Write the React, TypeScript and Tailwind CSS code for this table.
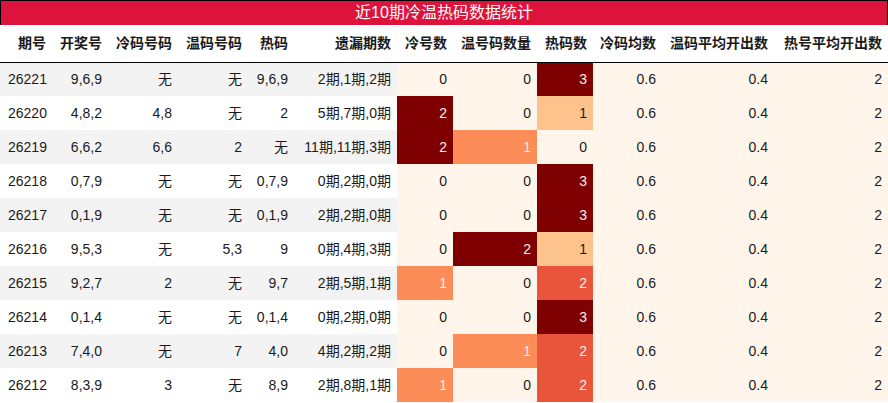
import React from "react"

type Row = {
  issue: string
  draw: string
  cold: string
  warm: string
  hot: string
  miss: string
  coldN: number
  warmN: number
  hotN: number
}

const rows: Row[] = [
  { issue: "26221", draw: "9,6,9", cold: "无", warm: "无", hot: "9,6,9", miss: "2期,1期,2期", coldN: 0, warmN: 0, hotN: 3 },
  { issue: "26220", draw: "4,8,2", cold: "4,8", warm: "无", hot: "2", miss: "5期,7期,0期", coldN: 2, warmN: 0, hotN: 1 },
  { issue: "26219", draw: "6,6,2", cold: "6,6", warm: "2", hot: "无", miss: "11期,11期,3期", coldN: 2, warmN: 1, hotN: 0 },
  { issue: "26218", draw: "0,7,9", cold: "无", warm: "无", hot: "0,7,9", miss: "0期,2期,0期", coldN: 0, warmN: 0, hotN: 3 },
  { issue: "26217", draw: "0,1,9", cold: "无", warm: "无", hot: "0,1,9", miss: "2期,2期,0期", coldN: 0, warmN: 0, hotN: 3 },
  { issue: "26216", draw: "9,5,3", cold: "无", warm: "5,3", hot: "9", miss: "0期,4期,3期", coldN: 0, warmN: 2, hotN: 1 },
  { issue: "26215", draw: "9,2,7", cold: "2", warm: "无", hot: "9,7", miss: "2期,5期,1期", coldN: 1, warmN: 0, hotN: 2 },
  { issue: "26214", draw: "0,1,4", cold: "无", warm: "无", hot: "0,1,4", miss: "0期,2期,0期", coldN: 0, warmN: 0, hotN: 3 },
  { issue: "26213", draw: "7,4,0", cold: "无", warm: "7", hot: "4,0", miss: "4期,2期,2期", coldN: 0, warmN: 1, hotN: 2 },
  { issue: "26212", draw: "8,3,9", cold: "3", warm: "无", hot: "8,9", miss: "2期,8期,1期", coldN: 1, warmN: 0, hotN: 2 },
]

const headers = [
  "期号",
  "开奖号",
  "冷码号码",
  "温码号码",
  "热码",
  "遗漏期数",
  "冷号数",
  "温号码数量",
  "热码数",
  "冷码均数",
  "温码平均开出数",
  "热号平均开出数",
]

const widths = [52, 56, 70, 70, 46, 103, 56, 84, 56, 69, 112, 114]

// OrRd-ish scale, picked by value / column max
function heat(v: number, max: number) {
  const t = max === 0 ? 0 : v / max
  if (t === 0) return "bg-[#fff5eb] text-[#1a1a1a]"
  if (t < 0.4) return "bg-[#fdc38d] text-[#1a1a1a]"
  if (t < 0.6) return "bg-[#fc8d59] text-[#f1f1f1]"
  if (t < 0.9) return "bg-[#e8553b] text-[#f1f1f1]"
  return "bg-[#7f0000] text-[#f1f1f1]"
}

export default function App() {
  const maxCold = Math.max(...rows.map((r) => r.coldN))
  const maxWarm = Math.max(...rows.map((r) => r.warmN))
  const maxHot = Math.max(...rows.map((r) => r.hotN))

  return (
    <div
      className="w-[888px] bg-white text-[14px] text-[#1a1a1a]"
      style={{ fontFamily: '"Liberation Sans", "Noto Sans CJK SC", sans-serif' }}
    >
      <div className="h-[25px] border border-b-0 border-black bg-[#dc143c] text-center text-[16px] leading-[24px] text-white">
        近10期冷温热码数据统计
      </div>
      <table className="w-[888px] table-fixed border-collapse">
        <colgroup>
          {widths.map((w, i) => (
            <col key={i} style={{ width: w }} />
          ))}
        </colgroup>
        <thead>
          <tr className="h-[37px] border-b border-black">
            {headers.map((h) => (
              <th key={h} className="whitespace-nowrap px-[6px] text-right font-bold">
                {h}
              </th>
            ))}
          </tr>
        </thead>
        <tbody>
          {rows.map((r, i) => {
            const stripe = i % 2 === 0 ? "bg-[#f3f3f3]" : "bg-white"
            return (
              <tr key={r.issue} className="h-[34px]">
                <td className={`${stripe} px-[6px] text-left pl-[8px]`}>{r.issue}</td>
                <td className={`${stripe} px-[6px] text-right`}>{r.draw}</td>
                <td className={`${stripe} px-[6px] text-right`}>{r.cold}</td>
                <td className={`${stripe} px-[6px] text-right`}>{r.warm}</td>
                <td className={`${stripe} px-[6px] text-right`}>{r.hot}</td>
                <td className={`${stripe} whitespace-nowrap px-[6px] text-right`}>{r.miss}</td>
                <td className={`${heat(r.coldN, maxCold)} px-[6px] text-right`}>{r.coldN}</td>
                <td className={`${heat(r.warmN, maxWarm)} px-[6px] text-right`}>{r.warmN}</td>
                <td className={`${heat(r.hotN, maxHot)} px-[6px] text-right`}>{r.hotN}</td>
                <td className="bg-[#fff5eb] px-[6px] text-right">0.6</td>
                <td className="bg-[#fff5eb] px-[6px] text-right">0.4</td>
                <td className="bg-[#fff5eb] px-[6px] text-right">2</td>
              </tr>
            )
          })}
        </tbody>
      </table>
    </div>
  )
}
